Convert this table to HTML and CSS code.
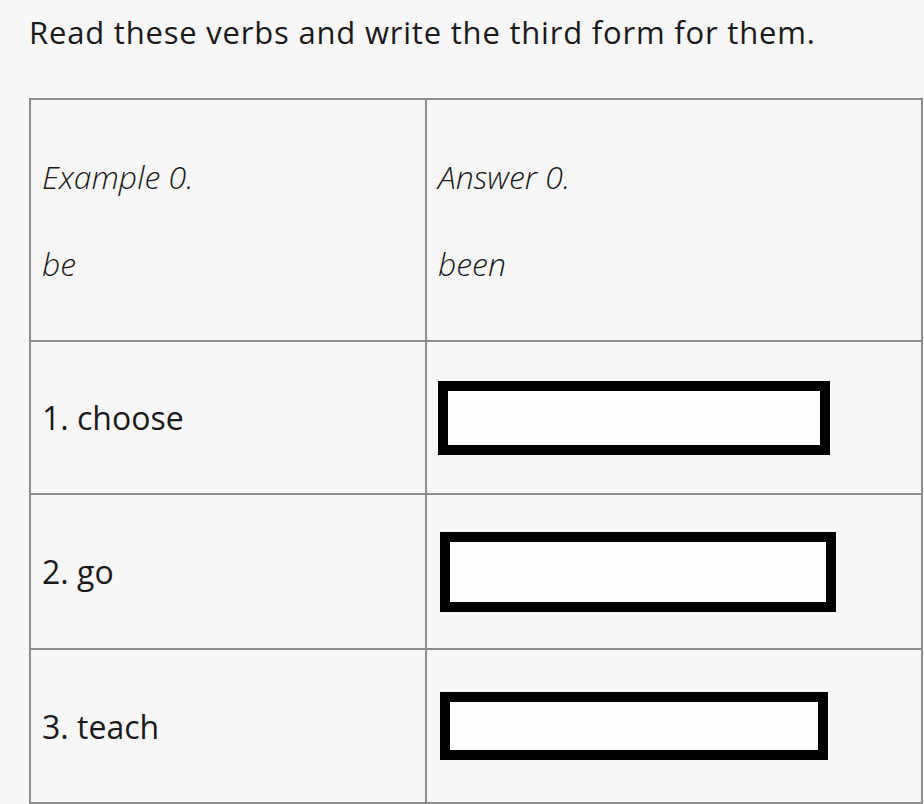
FILE: index.html
```html
<!DOCTYPE html>
<html lang="en">
<head>
<meta charset="utf-8">
<title>Third form</title>
<link rel="stylesheet" href="styles.css">
</head>
<body>
<main class="page">
  <h1 class="task">Read these verbs and write the third form for them.</h1>
  <table class="verbs">
    <colgroup>
      <col class="col-verb">
      <col class="col-answer">
    </colgroup>
    <tr class="row row-example">
      <td class="cell">
        <p class="ex">Example 0.</p>
        <p class="ex">be</p>
      </td>
      <td class="cell">
        <p class="ex">Answer 0.</p>
        <p class="ex">been</p>
      </td>
    </tr>
    <tr class="row row-q">
      <td class="cell"><span class="verb">1. choose</span></td>
      <td class="cell cell-input"><input class="answer answer-1" type="text" aria-label="Answer 1"></td>
    </tr>
    <tr class="row row-q row-q2">
      <td class="cell"><span class="verb">2. go</span></td>
      <td class="cell cell-input"><input class="answer answer-2" type="text" aria-label="Answer 2"></td>
    </tr>
    <tr class="row row-q row-q3">
      <td class="cell"><span class="verb">3. teach</span></td>
      <td class="cell cell-input"><input class="answer answer-3" type="text" aria-label="Answer 3"></td>
    </tr>
  </table>
</main>
</body>
</html>
```
FILE: styles.css
```css
html, body {
  margin: 0;
  padding: 0;
  background: #f7f7f7;
}

.page {
  padding: 11px 0 0 29px;
  font-family: "Open Sans", "DejaVu Sans", sans-serif;
  color: #1a1a1a;
}

.task {
  margin: 0 0 45px 0;
  font-size: 31px;
  font-weight: 400;
  line-height: 42px;
  color: #1a1a1a;
  letter-spacing: 0.8px;
}

.verbs {
  border-collapse: collapse;
  width: 892px;
  table-layout: fixed;
}

.col-verb { width: 396px; }
.col-answer { width: 496px; }

.cell {
  border: 2px solid #8d8d8d;
  padding: 0 0 0 11px;
  vertical-align: middle;
}

.row-example { height: 242px; }
.row-q { height: 153px; }
.row-q2 { height: 155px; }
.row-q3 { height: 154px; }

.ex {
  margin: 0;
  font-style: italic;
  font-weight: 300;
  font-size: 32px;
  line-height: 45px;
  color: #1a1a1a;
}

.ex + .ex {
  margin-top: 42px;
}

.verb {
  font-size: 32px;
  line-height: 45px;
  color: #1a1a1a;
}

.answer {
  display: block;
  box-sizing: border-box;
  border: 10px solid #000;
  background: #fdfdfd;
  padding: 0;
  margin: 0;
  outline: none;
  border-radius: 0;
}

.answer-1 { width: 392px; height: 74px; }
.answer-2 { width: 396px; height: 80px; margin-left: 2px; }
.answer-3 { width: 388px; height: 68px; margin-left: 2px; }
```
